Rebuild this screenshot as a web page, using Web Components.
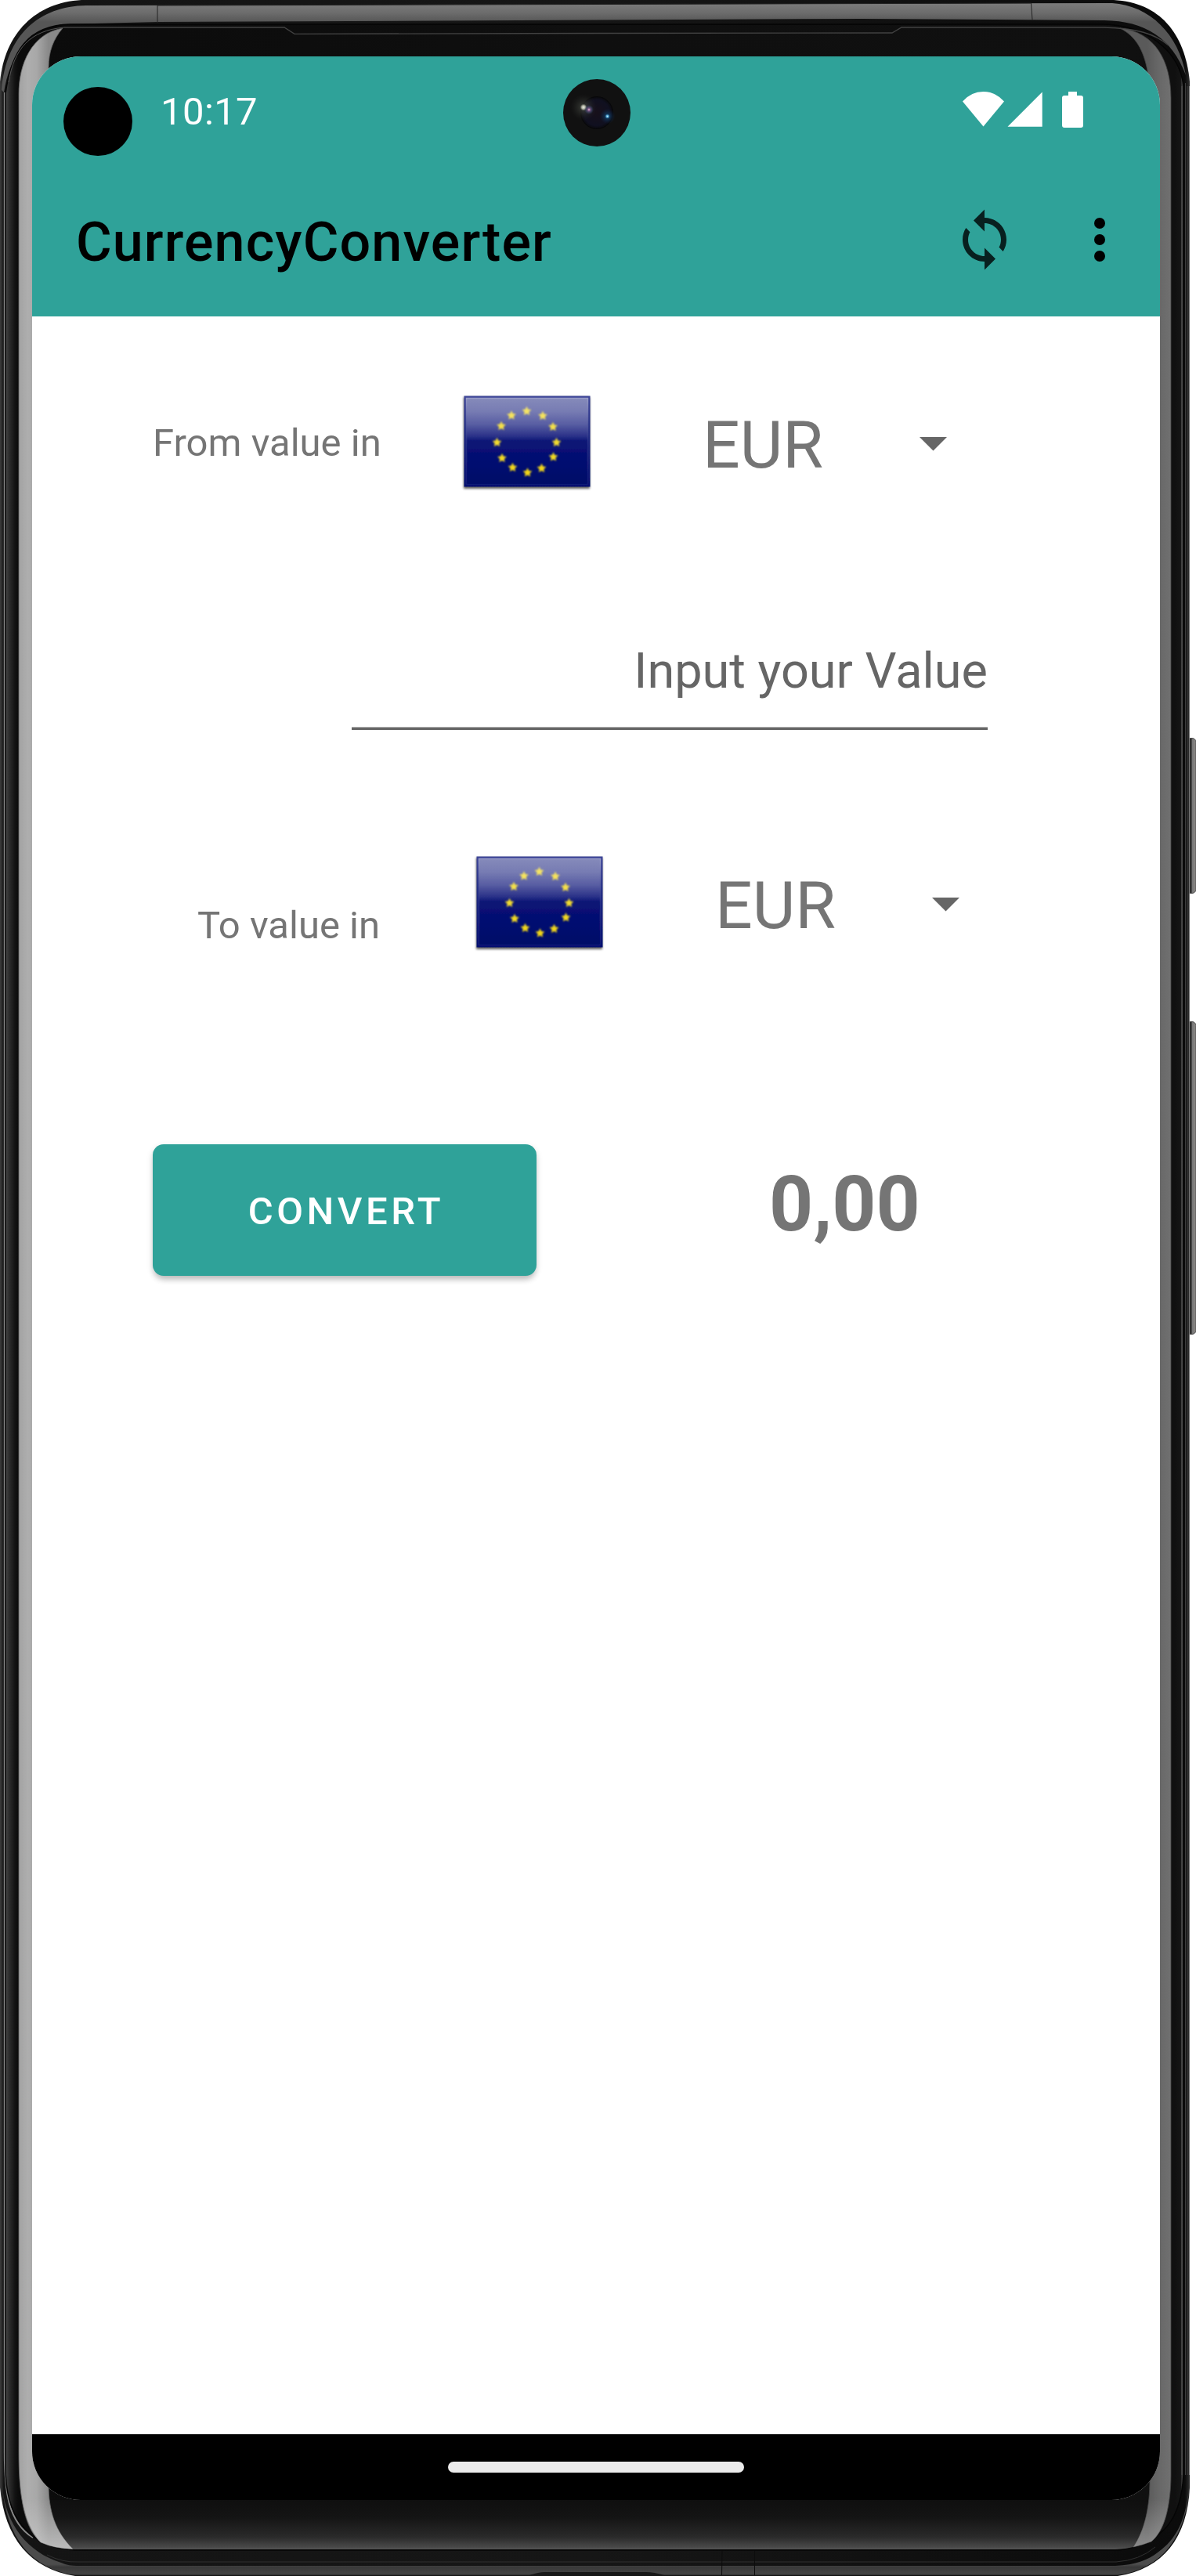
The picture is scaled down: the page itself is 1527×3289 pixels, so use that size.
<!DOCTYPE html>
<html lang="en">
<head>
<meta charset="utf-8">
<title>CurrencyConverter</title>
<style>
html,body{margin:0;background:#fff}
body{width:1527px;height:3289px;overflow:hidden;font-family:Roboto,sans-serif}
</style>
</head>
<body>
<phone-device>
  <status-bar time="10:17"></status-bar>
  <app-bar>CurrencyConverter</app-bar>
  <converter-screen>
    <currency-row code="EUR">From value in</currency-row>
    <value-input>Input your Value</value-input>
    <currency-row code="EUR" class="to">To value in</currency-row>
    <convert-row value="0,00">Convert</convert-row>
  </converter-screen>
  <nav-bar></nav-bar>
</phone-device>
<script>
const define = (name, html) => customElements.define(name, class extends HTMLElement {
  constructor() {
    super();
    this.attachShadow({mode: 'open'}).innerHTML = typeof html === 'function' ? html(this) : html;
  }
});

define('phone-frame', `
<style>:host{display:block;width:1527px;height:3289px}svg{display:block}</style>
<svg width="1527" height="3289" viewBox="0 0 1527 3289">
  <defs>
    <linearGradient id="rim" gradientUnits="userSpaceOnUse" x1="0" y1="0" x2="1519" y2="0">
      <stop offset="0" stop-color="#3c3c3c"/><stop offset=".0015" stop-color="#2c2c2c"/><stop offset=".003" stop-color="#141414"/>
      <stop offset=".5" stop-color="#161616"/><stop offset=".996" stop-color="#0b0b0b"/><stop offset="1" stop-color="#2e2e2e"/>
    </linearGradient>
    <linearGradient id="band" gradientUnits="userSpaceOnUse" x1="0" y1="5" x2="0" y2="28">
      <stop offset="0" stop-color="#7a7a7a"/><stop offset=".5" stop-color="#6c6c6c"/><stop offset="1" stop-color="#565656"/>
    </linearGradient>
    <linearGradient id="body" gradientUnits="userSpaceOnUse" x1="7" y1="0" x2="1512" y2="0">
      <stop offset="0" stop-color="#484848"/><stop offset=".003" stop-color="#2e2e2e"/><stop offset=".008" stop-color="#121212"/>
      <stop offset=".011" stop-color="#0b0b0b"/><stop offset=".5" stop-color="#0f0f0f"/><stop offset=".992" stop-color="#101010"/>
      <stop offset=".997" stop-color="#151515"/><stop offset=".998" stop-color="#3c3c3c"/><stop offset="1" stop-color="#383838"/>
    </linearGradient>
    <linearGradient id="sheen" x1="0" y1="0" x2="0" y2="1">
      <stop offset="0" stop-color="#0f0f0f"/><stop offset=".35" stop-color="#141414"/><stop offset=".75" stop-color="#2a2a2a"/>
      <stop offset=".95" stop-color="#484848"/><stop offset="1" stop-color="#555"/>
    </linearGradient>
    <linearGradient id="chin" gradientUnits="userSpaceOnUse" x1="0" y1="3274" x2="0" y2="3289">
      <stop offset="0" stop-color="#4c4c4c"/><stop offset=".25" stop-color="#383838"/><stop offset=".8" stop-color="#454545"/><stop offset="1" stop-color="#202020"/>
    </linearGradient>
    <linearGradient id="glareL" gradientUnits="userSpaceOnUse" x1="24" y1="0" x2="62" y2="0">
      <stop offset="0" stop-color="#a2a2a2"/><stop offset=".3" stop-color="#aeaeae"/><stop offset=".6" stop-color="#a8a8a8"/><stop offset="1" stop-color="#898989"/>
    </linearGradient>
    <linearGradient id="glareR" gradientUnits="userSpaceOnUse" x1="1465" y1="0" x2="1495" y2="0">
      <stop offset="0" stop-color="#5a5a5a"/><stop offset=".5" stop-color="#686868"/><stop offset="1" stop-color="#707070"/>
    </linearGradient>
    <linearGradient id="low" gradientUnits="userSpaceOnUse" x1="0" y1="3190" x2="0" y2="3255">
      <stop offset="0" stop-color="#ccc" stop-opacity="0"/><stop offset="1" stop-color="#ccc" stop-opacity=".75"/>
    </linearGradient>
    <linearGradient id="key" x1="0" y1="0" x2="1" y2="0">
      <stop offset="0" stop-color="#222"/><stop offset=".5" stop-color="#2d2d2d"/><stop offset=".6" stop-color="#777"/><stop offset="1" stop-color="#8d8a87"/>
    </linearGradient>
  </defs>
  <g fill="url(#key)" stroke="#4b4b4b" stroke-width="1">
    <rect x="1515" y="942.5" width="12" height="198" rx="5"/>
    <rect x="1515" y="1304.5" width="12" height="399" rx="5"/>
  </g>
  <path fill="url(#rim)" d="M104 0H1422C1480 3 1513 42 1519 104V3176C1516 3240 1485 3280 1427 3289H96C38 3280 6 3240 0 3176V104C6 42 46 3 104 0Z"/>
  <path fill="url(#chin)" d="M3 3175C7 3224 36 3259 78 3272C85 3275 92 3276 98 3276H1424C1450 3275 1467 3268 1478 3259C1502 3242 1514 3218 1518 3176C1515 3238 1484 3280 1427 3288H96C40 3280 8 3240 3 3175Z"/>
  <path fill="url(#band)" d="M2 115C8 44 50 8 110 7L1420 4C1468 7 1505 44 1514 96C1496 48 1462 27 1410 26L1100 24L201 28L78 31C34 42 12 73 5 118Z"/>
  <path stroke="#222" fill="none" stroke-width="1" d="M201 7V29M1316.5 4L1318 25M201 7L1316 4"/>
  <path fill="none" stroke="#888" stroke-width="2" d="M5.8 118V3130C5.8 3180 10 3220 42 3240"/>
  <path fill="none" stroke="#4a4a4a" stroke-width=".8" d="M1513.5 106V3160M1516 110V3160"/>
  <path fill="none" stroke="#777" stroke-width="1.1" d="M1518.5 110V3160"/>
  <path fill="url(#body)" stroke="#050505" stroke-width="1.5" d="M7 120C14 66 35 32 90 31H1406C1462 31 1506 64 1511 110V3160C1508 3212 1490 3245 1430 3256H96C32 3252 7 3210 7 3150Z"/>
  <path fill="none" stroke="#424242" stroke-width="1.3" d="M82 35H363L376 43.3L760 42.5L1139 42L1151 35H1410C1450 36 1475 43 1492 58"/>
  <path fill="none" stroke="#555" stroke-width="1" d="M11 105C18 62 38 39 82 35M1509 110V3160"/>
  <path fill="url(#sheen)" d="M62 3192H1468C1466 3215 1460 3235 1447 3252Q1435 3255 1424 3255H92Q62 3235 62 3192Z"/>
  <path fill="url(#glareL)" stroke="#666" stroke-width=".8" d="M80 36C40 43 24 82 24 120V3130C24 3180 28 3220 52 3246Q70 3254 93 3254.5C70 3232 62 3205 62 3172V86C62 66 68 50 80 36Z"/>
  <path fill="url(#low)" d="M25 3170C28 3205 34 3230 52 3246Q70 3254 93 3254.5C70 3232 62 3205 62 3172Z"/>
  <path fill="url(#glareR)" stroke="#444" stroke-width=".8" d="M1430 36C1475 41 1495 78 1495 125V3160C1495 3200 1486 3232 1470 3245Q1460 3249 1447 3252C1462 3230 1468 3200 1468 3166L1465 90C1460 64 1450 46 1430 36Z"/>
  <path fill="url(#low)" opacity=".6" d="M1494 3172C1494 3205 1486 3232 1470 3245Q1460 3249 1447 3252C1462 3230 1468 3200 1468 3166Z"/>
  <path fill="none" stroke="#303030" stroke-width="1" d="M60 3262Q80 3272 100 3271H1425Q1455 3269 1475 3252"/>
  <path fill="#181818" d="M676 3288Q688 3284 695 3284H825Q835 3284 848 3288Z"/>
  <path fill="none" stroke="#0c0c0c" stroke-width="1" d="M922 3257L921.5 3288M963.5 3257V3288"/>
</svg>`);

define('phone-device', `
<style>
:host{display:grid;width:1527px;height:3289px}
phone-frame,.screen{grid-area:1/1}
.screen{display:flex;flex-direction:column;width:1440px;height:3120px;margin:72px 0 0 41px;border-radius:62px;overflow:hidden;background:#fff;z-index:1}
</style>
<phone-frame></phone-frame>
<div class="screen"><slot></slot></div>`);

define('status-bar', el => `
<style>
:host{display:flex;box-sizing:border-box;flex:none;height:136px;background:#2fa299;color:#fff}
.hole{flex:none;width:88px;height:88px;border-radius:50%;background:#000;margin:39px 0 0 40px}
.time{flex:none;font-size:49px;line-height:60px;margin:40.500px 0 0 36px;width:130px;letter-spacing:.4px}
svg{display:block;flex:none}
.cam{margin:28px 0 0 382.500px}
.sig{margin:43px 0 0 421.500px}
</style>
<div class="hole"></div>
<div class="time">${el.getAttribute('time')}</div>
<svg class="cam" width="88" height="88" viewBox="-44 -44 88 88">
  <defs>
    <radialGradient id="l"><stop offset="0" stop-color="#17101a"/><stop offset=".8" stop-color="#101020"/><stop offset="1" stop-color="#0a0a0d"/></radialGradient>
    <radialGradient id="b"><stop offset="0" stop-color="#bff0ff"/><stop offset=".16" stop-color="#4a9ed0"/><stop offset=".3" stop-color="#124068" stop-opacity=".7"/><stop offset="1" stop-color="#102040" stop-opacity="0"/></radialGradient>
    <radialGradient id="w"><stop offset="0" stop-color="#f0f2e6"/><stop offset=".14" stop-color="#a9ac9c"/><stop offset=".26" stop-color="#3a3e38" stop-opacity=".7"/><stop offset="1" stop-color="#222" stop-opacity="0"/></radialGradient>
    <radialGradient id="p"><stop offset="0" stop-color="#eab8dc"/><stop offset=".3" stop-color="#70507c"/><stop offset="1" stop-color="#264870" stop-opacity="0"/></radialGradient>
  </defs>
  <circle r="43" fill="#111"/><circle r="20.5" fill="url(#l)" stroke="#08080a"/>
  <circle cx="13.5" cy="4.500" r="10" fill="url(#b)"/>
  <circle cx="-17" cy="-7" r="17" fill="url(#w)"/><circle cx="-10" cy="-4" r="6" fill="url(#p)"/>
</svg>
<svg class="sig" width="160" height="50" viewBox="1227 115 160 50" fill="#fff">
  <path d="M1229 129.5Q1240 117 1255.500 117T1282 129.500L1255.500 161.500Z"/>
  <path d="M1286.500 161.700L1330.700 117.500V161.700Z"/>
  <path d="M1364 117H1375V122H1380Q1383 122 1383 125V160Q1383 163 1380 163H1359Q1356 163 1356 160V125Q1356 122 1359 122H1364Z"/>
</svg>`);

define('app-bar', `
<style>
:host{display:flex;box-sizing:border-box;flex:none;align-items:center;height:196px;padding:0 35px 0 56px;background:#2fa299;color:#000}
.title{flex:1;font-size:70px;font-weight:500;line-height:84px;padding-top:6px;letter-spacing:1.12px}
svg{display:block}
.sync{margin-right:63px}
</style>
<div class="title"><slot></slot></div>
<svg class="sync" width="84" height="84" viewBox="0 0 24 24" fill="#08201f"><path d="M12 4V1L8 5l4 4V6c3.310 0 6 2.690 6 6 0 1.010-.250 1.970-.700 2.800l1.460 1.460C19.540 15.030 20 13.570 20 12c0-4.420-3.580-8-8-8zm0 14c-3.310 0-6-2.690-6-6 0-1.010.250-1.970.700-2.800L5.240 7.740C4.460 8.970 4 10.430 4 12c0 4.420 3.580 8 8 8v3l4-4-4-4v3z"/></svg>
<svg width="84" height="84" viewBox="0 0 24 24"><circle cx="12" cy="6" r="2"/><circle cx="12" cy="12" r="2"/><circle cx="12" cy="18" r="2"/></svg>`);

define('converter-screen', `
<style>:host{display:flex;flex-direction:column;flex:1;min-height:0;background:#fff;color:#757575}</style><slot></slot>`);

const star = (x, y) => {
  let p = '';
  for (let i = 0; i < 10; i++) {
    const r = i % 2 ? 3 : 6.2, a = Math.PI * (i / 5 - .5);
    p += `${(x + r * Math.cos(a)).toFixed(1)},${(y + r * Math.sin(a)).toFixed(1)} `;
  }
  return `<polygon points="${p}"/>`;
};
const stars = [[80.5,20],[101,26],[114,40],[118.500,60],[114.500,78.500],[99.500,93],[81.500,98.500],[62.500,92],[49,80],[42.500,60],[48,39],[61,25.500]];

define('eu-flag', `
<style>:host{display:block;flex:none;width:168px;height:128px}svg{display:block}</style>
<svg width="168" height="128" viewBox="-3 -4 168 128">
  <defs>
    <linearGradient id="g" x1="0" y1="0" x2="0" y2="1">
      <stop offset="0" stop-color="#858aba"/><stop offset=".15" stop-color="#777cb3"/><stop offset=".3" stop-color="#595ea3"/><stop offset=".44" stop-color="#2b3288"/><stop offset=".5" stop-color="#0b1575"/>
      <stop offset=".7" stop-color="#040d72"/><stop offset=".85" stop-color="#00076d"/><stop offset="1" stop-color="#000867"/>
    </linearGradient>
    <linearGradient id="e" x1="0" y1="0" x2="0" y2="1"><stop offset="0" stop-color="#3d4598"/><stop offset=".5" stop-color="#1b257f"/><stop offset="1" stop-color="#030d70"/></linearGradient>
    <linearGradient id="i" x1="0" y1="0" x2="0" y2="1"><stop offset="0" stop-color="#979bc6"/><stop offset=".5" stop-color="#262f86"/><stop offset="1" stop-color="#101a76"/></linearGradient>
    <linearGradient id="s" gradientUnits="userSpaceOnUse" x1="0" y1="15" x2="0" y2="100"><stop offset="0" stop-color="#f5e56c"/><stop offset=".5" stop-color="#f3dc31"/><stop offset="1" stop-color="#f2d615"/></linearGradient>
    <filter id="d" x="-10%" y="-10%" width="120%" height="120%"><feGaussianBlur stdDeviation="1.7"/></filter>
    <filter id="f"><feGaussianBlur stdDeviation=".9"/></filter>
    <filter id="soft" x="-5%" y="-5%" width="110%" height="110%"><feGaussianBlur stdDeviation=".6"/></filter>
  </defs>
  <rect x="0" y="2" width="161" height="117" fill="#000" opacity=".62" filter="url(#d)"/>
  <g filter="url(#soft)">
    <rect x=".5" y=".5" width="161" height="116" fill="url(#e)"/>
    <rect x="3.500" y="3.500" width="155" height="110" fill="url(#g)" stroke="url(#i)" stroke-width="1.500"/>
  </g>
  <g fill="url(#s)" filter="url(#f)">${stars.map(s => star(...s)).join('')}</g>
</svg>`);

define('currency-row', el => `
<style>
:host{display:flex;flex:none;height:128px;margin:97px 0 0 154px}
:host(.to){margin:157px 0 0 211px}
.label{flex:none;width:394px;font-size:49px;line-height:60px;margin-top:35px;white-space:nowrap}
:host(.to) .label{width:353px;margin-top:63px}
.code{flex:none;width:276.500px;font-size:84px;line-height:100px;margin:18px 0 0 140px}
svg{display:block;flex:none;margin-top:57px}
</style>
<div class="label"><slot></slot></div>
<eu-flag></eu-flag>
<div class="code">${el.getAttribute('code')}</div>
<svg width="35" height="18" viewBox="0 0 35 18"><path d="M0 0H35L17.500 17.500Z" fill="#666"/></svg>`);

define('value-input', `
<style>
:host{display:block;box-sizing:border-box;flex:none;width:812px;height:114px;margin:189px 0 0 408px;padding-top:1px;text-align:right;font-size:63px;line-height:76px;color:#666;background:linear-gradient(#b0b0b0 1px,#666 1px) bottom/100% 4px no-repeat}
</style><slot></slot>`);

define('convert-row', el => `
<style>
:host{display:flex;flex:none;margin:244px 0 0 154px}
button{box-sizing:border-box;width:490px;height:168px;border:0;border-radius:14px;background:#2fa299;color:#fff;font:500 49px/60px Roboto,sans-serif;letter-spacing:4.5px;text-transform:uppercase;padding:4px 0 0 4px;box-shadow:0 7px 9px -3px rgba(0,0,0,.2),0 3px 8px rgba(0,0,0,.14)}
.value{margin:19px 0 0 297px;font-size:98px;font-weight:700;line-height:116px}
</style>
<button><slot></slot></button>
<div class="value">${el.getAttribute('value')}</div>`);

define('nav-bar', `
<style>
:host{display:flex;flex:none;height:84px;background:#000;align-items:center}
.pill{width:378px;height:14px;border-radius:7px;background:#ebebeb;margin-left:531px}
</style><div class="pill"></div>`);
</script>
</body>
</html>
